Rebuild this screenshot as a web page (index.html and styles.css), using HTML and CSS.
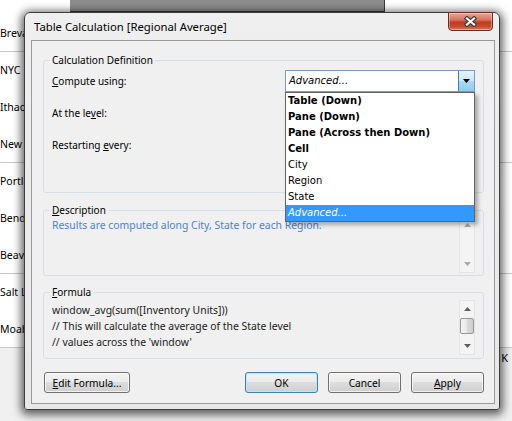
FILE: index.html
```html
<!DOCTYPE html>
<html>
<head>
<meta charset="utf-8">
<link rel="stylesheet" href="styles.css">
</head>
<body>
<div class="screen">
  <div class="topstrip"><div class="strip-dark"></div></div>
  <div class="sheet">
    <div class="grp"><div class="cell">Brevard</div></div>
    <div class="grp"><div class="cell">NYC</div><div class="cell">Ithaca</div><div class="cell">New York</div></div>
    <div class="grp"><div class="cell">Portland</div><div class="cell">Bend</div><div class="cell">Beaverton</div></div>
    <div class="grp"><div class="cell">Salt Lake City</div><div class="cell">Moab</div></div>
  </div>
  <div class="below"><span class="k">K</span></div>

  <div class="dialog">
    <div class="titlebar">
      <span class="title">Table Calculation [Regional Average]</span>
      <button class="close" aria-label="Close">
        <svg width="13" height="11" viewBox="0 0 13 11"><path d="M3 2.5 L10 8.5 M10 2.5 L3 8.5" stroke="#3b3b3b" stroke-width="4.4" stroke-linecap="square" fill="none"/><path d="M3 2.5 L10 8.5 M10 2.5 L3 8.5" stroke="#ffffff" stroke-width="2.2" stroke-linecap="square" fill="none"/></svg>
      </button>
    </div>
    <div class="client">
      <fieldset class="group g-def">
        <legend>Calculation Definition</legend>
        <div class="row">
          <span class="lbl"><u>C</u>ompute using:</span>
          <div class="combo-wrap">
            <div class="combo">
              <span class="combo-val">Advanced...</span>
              <span class="combo-btn"><svg width="7" height="4" viewBox="0 0 7 4"><path d="M0 0H7L3.5 4Z" fill="#000"/></svg></span>
            </div>
            <ul class="droplist">
              <li class="b">Table (Down)</li>
              <li class="b">Pane (Down)</li>
              <li class="b">Pane (Across then Down)</li>
              <li class="b">Cell</li>
              <li>City</li>
              <li>Region</li>
              <li>State</li>
              <li class="sel">Advanced...</li>
            </ul>
          </div>
        </div>
        <div class="row"><span class="lbl">At the le<u>v</u>el:</span></div>
        <div class="row"><span class="lbl">Restarting <u>e</u>very:</span></div>
      </fieldset>

      <fieldset class="group g-desc">
        <legend><u>D</u>escription</legend>
        <div class="gbody">
          <p class="desc">Results are computed along City, State for each Region.</p>
          <div class="vscroll dis">
            <div class="sb-btn"><svg width="7" height="4" viewBox="0 0 7 4"><path d="M3.5 0L7 4H0Z"/></svg></div>
            <div class="sb-btn down"><svg width="7" height="4" viewBox="0 0 7 4"><path d="M0 0H7L3.5 4Z"/></svg></div>
          </div>
        </div>
      </fieldset>

      <fieldset class="group g-form">
        <legend><u>F</u>ormula</legend>
        <div class="gbody">
          <div class="code">
            <div>window_avg(sum([Inventory Units]))</div>
            <div>// This will calculate the average of the State level</div>
            <div>// values across the 'window'</div>
          </div>
          <div class="vscroll">
            <div class="sb-btn"><svg width="7" height="4" viewBox="0 0 7 4"><path d="M3.5 0L7 4H0Z"/></svg></div>
            <div class="sb-thumb"></div>
            <div class="sb-btn down"><svg width="7" height="4" viewBox="0 0 7 4"><path d="M0 0H7L3.5 4Z"/></svg></div>
          </div>
        </div>
      </fieldset>

      <div class="buttons">
        <button class="btn btn-edit"><u>E</u>dit Formula...</button>
        <button class="btn btn-ok">OK</button>
        <button class="btn">Cancel</button>
        <button class="btn"><u>A</u>pply</button>
      </div>
    </div>
  </div>
</div>
</body>
</html>
```

FILE: styles.css
```css
* { box-sizing: border-box; }
html, body { margin: 0; padding: 0; }
body {
  width: 512px;
  height: 421px;
  overflow: hidden;
  font-family: "Noto Sans", "Open Sans", sans-serif;
  font-size: 10px;
  color: #000;
  background: #f0f0f0;
}
.screen {
  position: relative;
  width: 512px;
  height: 421px;
  overflow: hidden;
  background: #f0f0f0;
}
.topstrip {
  height: 15px;
  background: #fff;
}
.strip-dark {
  margin-left: 70px;
  width: 315px;
  height: 12px;
  background: #8d8d8d;
  border-right: 1px solid #3a3a3a;
  border-bottom: 1px solid #3a3a3a;
}
.sheet { background: #fff; }
.cell {
  height: 37px;
  line-height: 36px;
  font-size: 10.5px;
  white-space: nowrap;
  overflow: hidden;
}
.cell:last-child { border-bottom: 1px solid #c8c8c8; }
.below {
  padding-top: 3px;
  text-align: right;
  padding-right: 4px;
  font-size: 11px;
  line-height: 14px;
}

.dialog {
  position: absolute;
  left: 24px;
  top: 12px;
  width: 476px;
  height: 398px;
  border: 1px solid #3e3e3e;
  border-radius: 6px 6px 3px 3px;
  background: linear-gradient(#efefef, #e7e7e7);
  box-shadow: 0 2px 8px 3px rgba(0, 0, 0, 0.6);
  display: flex;
  flex-direction: column;
}
.titlebar {
  height: 27px;
  display: flex;
  align-items: flex-start;
  padding-left: 9px;
}
.title {
  flex: 1;
  line-height: 27px;
  font-size: 11.3px;
  white-space: nowrap;
}
.close {
  margin-top: -1px;
  margin-right: 6px;
  width: 45px;
  height: 19px;
  padding: 0;
  border: 1px solid #6b2d22;
  border-radius: 0 0 4px 4px;
  background: linear-gradient(#e9a797 0%, #d9735c 40%, #c23a1f 55%, #c94a2e 80%, #dd7d64 100%);
  box-shadow: inset 0 0 0 1px rgba(255, 255, 255, 0.35);
  display: flex;
  align-items: center;
  justify-content: center;
}
.client {
  flex: 1;
  margin: 0 4px 5px 6px;
  border: 1px solid #9a9a9a;
  background: #f0f0f0;
  padding: 11px 10px 0 11px;
  display: flex;
  flex-direction: column;
}
.group {
  margin: 0;
  padding: 2px 8px 0 8px;
  border: 1px solid #d5dfe5;
  border-radius: 3px;
  min-width: 0;
}
.group legend {
  padding: 0 2px;
  margin-left: -2px;
  line-height: 16px;
  font-size: 10px;
  font-kerning: none;
}
.g-def { height: 141px; }
.g-desc { height: 74px; margin-top: 9px; padding-top: 0; }
.g-form { height: 75px; margin-top: 8px; padding-top: 0; }

.row {
  display: flex;
  align-items: center;
  height: 22px;
}
.row + .row { margin-top: 10px; }
.lbl { white-space: nowrap; font-kerning: none; }
.combo-wrap {
  position: relative;
  margin-left: auto;
  width: 190px;
  height: 22px;
}
.combo {
  height: 22px;
  border: 1px solid #7a9cc4;
  background: #fff;
  display: flex;
  align-items: stretch;
}
.combo-val {
  flex: 1;
  padding-left: 3px;
  line-height: 20px;
  font-family: "DejaVu Sans", sans-serif;
  font-style: italic;
  font-size: 10px;
}
.combo-btn {
  width: 16px;
  border-left: 1px solid #3c7fb1;
  background: linear-gradient(#e5f4fc 0%, #c9e8f8 50%, #a9d9f2 50%, #90cdee 100%);
  display: flex;
  align-items: center;
  justify-content: center;
}
.droplist {
  position: absolute;
  left: 0;
  top: 22px;
  width: 190px;
  margin: 0;
  padding: 0;
  list-style: none;
  background: #fff;
  border: 1px solid #646464;
  box-shadow: 3px 3px 4px rgba(0, 0, 0, 0.3);
  font-family: "DejaVu Sans", sans-serif;
  font-size: 10px;
  z-index: 2;
}
.droplist li {
  height: 16px;
  line-height: 16px;
  padding-left: 2px;
  white-space: nowrap;
}
.droplist .b { font-weight: bold; }
.droplist .sel {
  background: #3399ff;
  color: #fff;
  font-style: italic;
}

.gbody {
  display: flex;
  align-items: flex-start;
}
.desc {
  flex: 1;
  margin: 0;
  font-size: 10.4px;
  line-height: 14px;
  color: #4a82d0;
}
.code {
  flex: 1;
  padding-top: 2px;
  font-size: 10.4px;
  line-height: 16px;
  color: #1a1a1a;
  white-space: nowrap;
}
.vscroll {
  width: 16px;
  display: flex;
  flex-direction: column;
  background: #f4f4f4;
  border: 1px solid #e4e4e4;
}
.g-desc .vscroll { height: 57px; margin-top: -2px; }
.g-form .vscroll { height: 55px; }
.sb-btn {
  height: 16px;
  display: flex;
  align-items: center;
  justify-content: center;
}
.sb-btn svg { fill: #5e5e5e; }
.dis .sb-btn svg { fill: #a9a9a9; }
.sb-btn.down { margin-top: auto; }
.sb-thumb {
  height: 16px;
  margin-top: 1px;
  border: 1px solid #979797;
  border-radius: 2px;
  background: linear-gradient(90deg, #f5f5f5 0%, #e6e6e6 50%, #d8d8d8 51%, #cfcfcf 100%);
}

.buttons {
  display: flex;
  margin-top: 13px;
  height: 21px;
  padding-left: 1px;
  gap: 10px;
}
.btn {
  width: 73px;
  height: 21px;
  padding: 0;
  font-family: inherit;
  font-size: 10.2px;
  font-kerning: none;
  color: #000;
  border: 1px solid #707070;
  border-radius: 3px;
  background: linear-gradient(#f2f2f2 0%, #ebebeb 50%, #dddddd 50%, #cfcfcf 100%);
  box-shadow: inset 0 0 0 1px rgba(255, 255, 255, 0.7);
}
.btn-edit {
  width: 86px;
  margin-right: auto;
}
.btn-ok {
  border-color: #3c7fb1;
  box-shadow: inset 0 0 0 1px #bfe5fa;
}
```
